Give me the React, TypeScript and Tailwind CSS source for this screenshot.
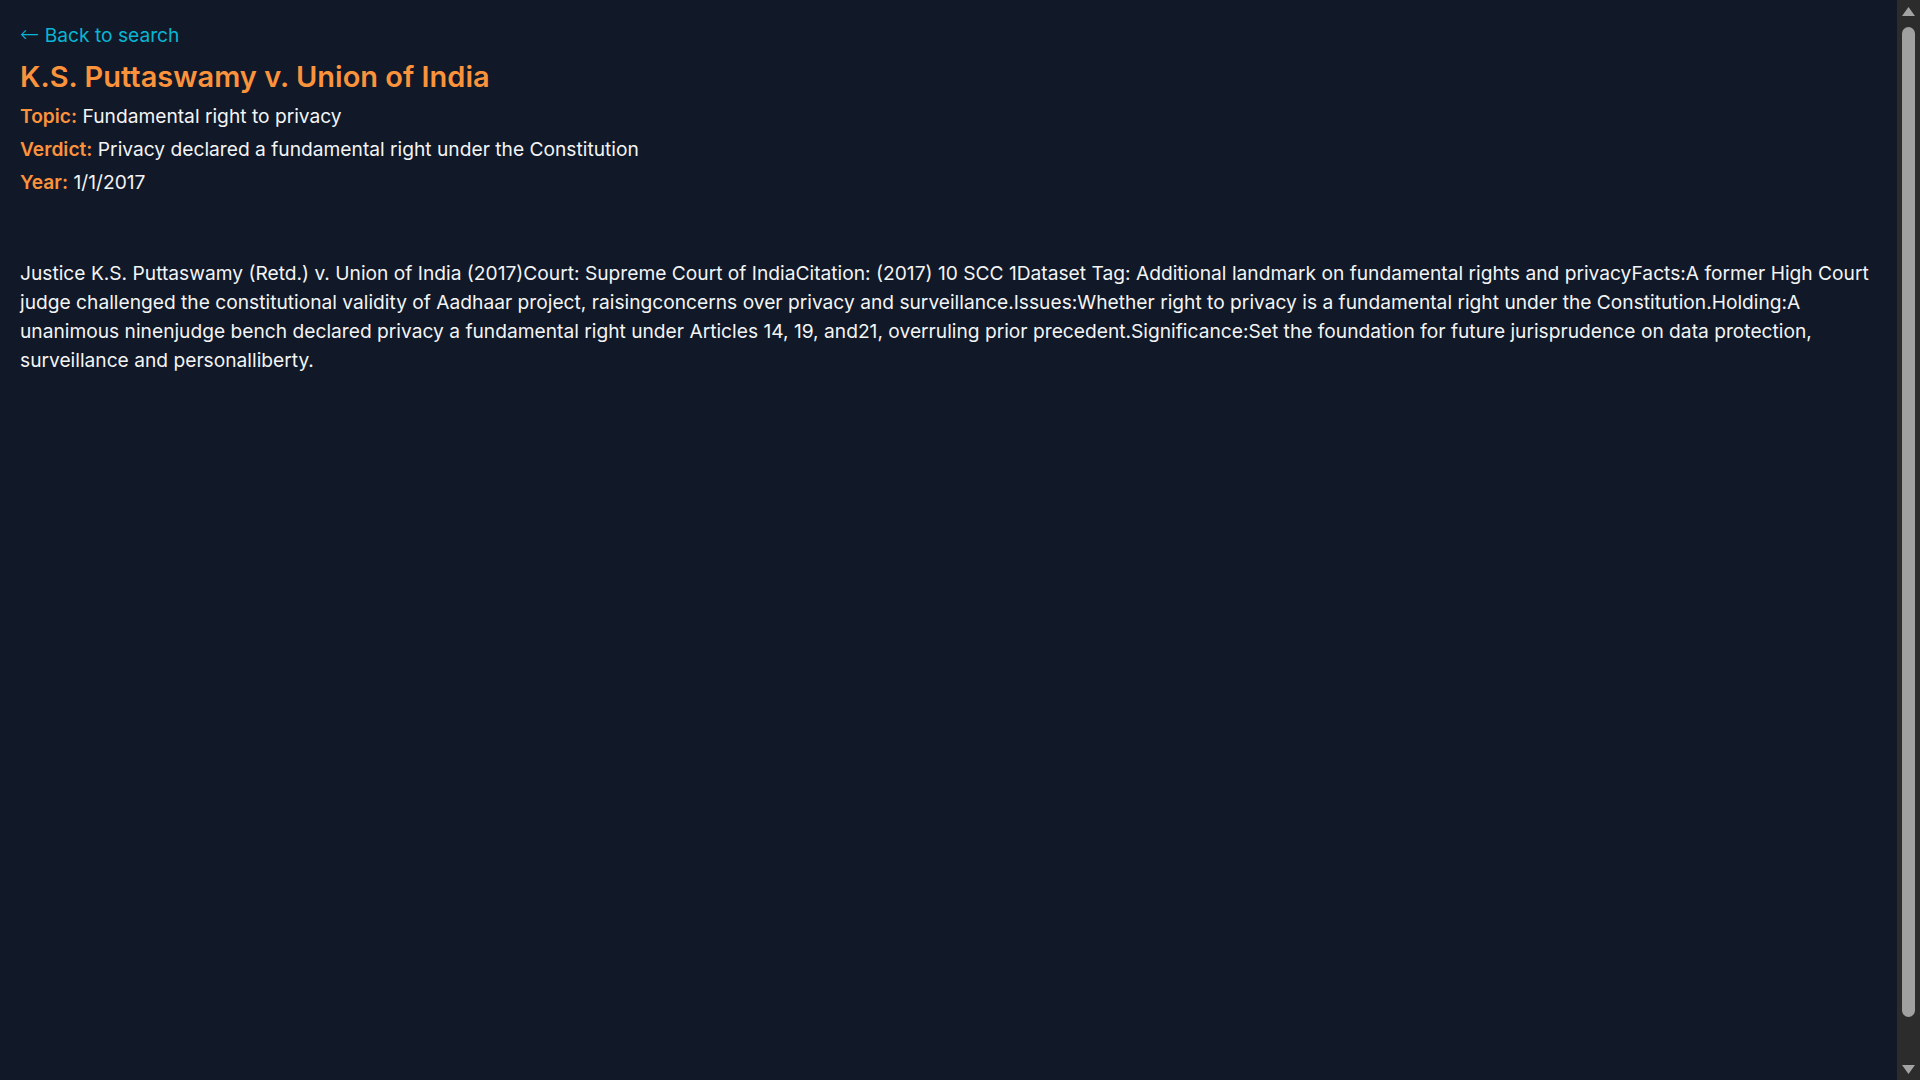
import React from "react";

function Label({ children }: { children: React.ReactNode }) {
  return <span className="font-semibold text-[#fb923c]">{children}</span>;
}

export default function App() {
  return (
    <div className="flex h-screen overflow-hidden bg-[#111827]" style={{ fontFamily: "Inter, 'Noto Sans', sans-serif" }}>
      <main className="min-w-0 flex-1 overflow-hidden px-5 pt-[21px] pb-5 text-gray-100">
        <a href="#" className="block text-[19.2px] leading-7 text-[#06b6d4]">
          <span className="text-[23px] leading-none font-extralight" style={{ fontFamily: "'DejaVu Sans', sans-serif" }}>←</span> Back to search
        </a>
        <h1 className="mt-[10px] text-[29px] leading-9 font-semibold text-[#fb923c]">K.S. Puttaswamy v. Union of India</h1>
        <p className="mt-[7px] text-[19.2px] leading-7">
          <Label>Topic:</Label> Fundamental right to privacy
        </p>
        <p className="mt-[5px] text-[19.2px] leading-7">
          <Label>Verdict:</Label> Privacy declared a fundamental right under the Constitution
        </p>
        <p className="mt-[5px] text-[19.2px] leading-7">
          <Label>Year:</Label> 1/1/2017
        </p>
        <p className="mt-[63px] text-[19.2px] leading-[29px]">
          Justice K.S. Puttaswamy (Retd.) v. Union of India (2017)Court: Supreme Court of IndiaCitation: (2017) 10 SCC 1Dataset Tag: Additional landmark on fundamental rights and privacyFacts:A former High Court judge challenged the constitutional validity of Aadhaar project, raisingconcerns over privacy and surveillance.Issues:Whether right to privacy is a fundamental right under the Constitution.Holding:A unanimous ninenjudge bench declared privacy a fundamental right under Articles 14, 19, and21, overruling prior precedent.Significance:Set the foundation for future jurisprudence on data protection, surveillance and personalliberty.
        </p>
      </main>
      <aside className="flex w-[23px] shrink-0 flex-col items-center bg-[#2c2c2c]">
        <svg width="13" height="9" viewBox="0 0 13 9" className="mt-[7px] shrink-0">
          <path d="M6.5 0 L13 9 L0 9 Z" fill="#a3a3a3" />
        </svg>
        <div className="mt-[11px] h-[990px] w-[13px] shrink-0 rounded-full bg-[#a0a0a0]" />
        <div className="flex-1" />
        <svg width="13" height="9" viewBox="0 0 13 9" className="mb-[6px] shrink-0">
          <path d="M0 0 L13 0 L6.5 9 Z" fill="#a3a3a3" />
        </svg>
      </aside>
    </div>
  );
}
